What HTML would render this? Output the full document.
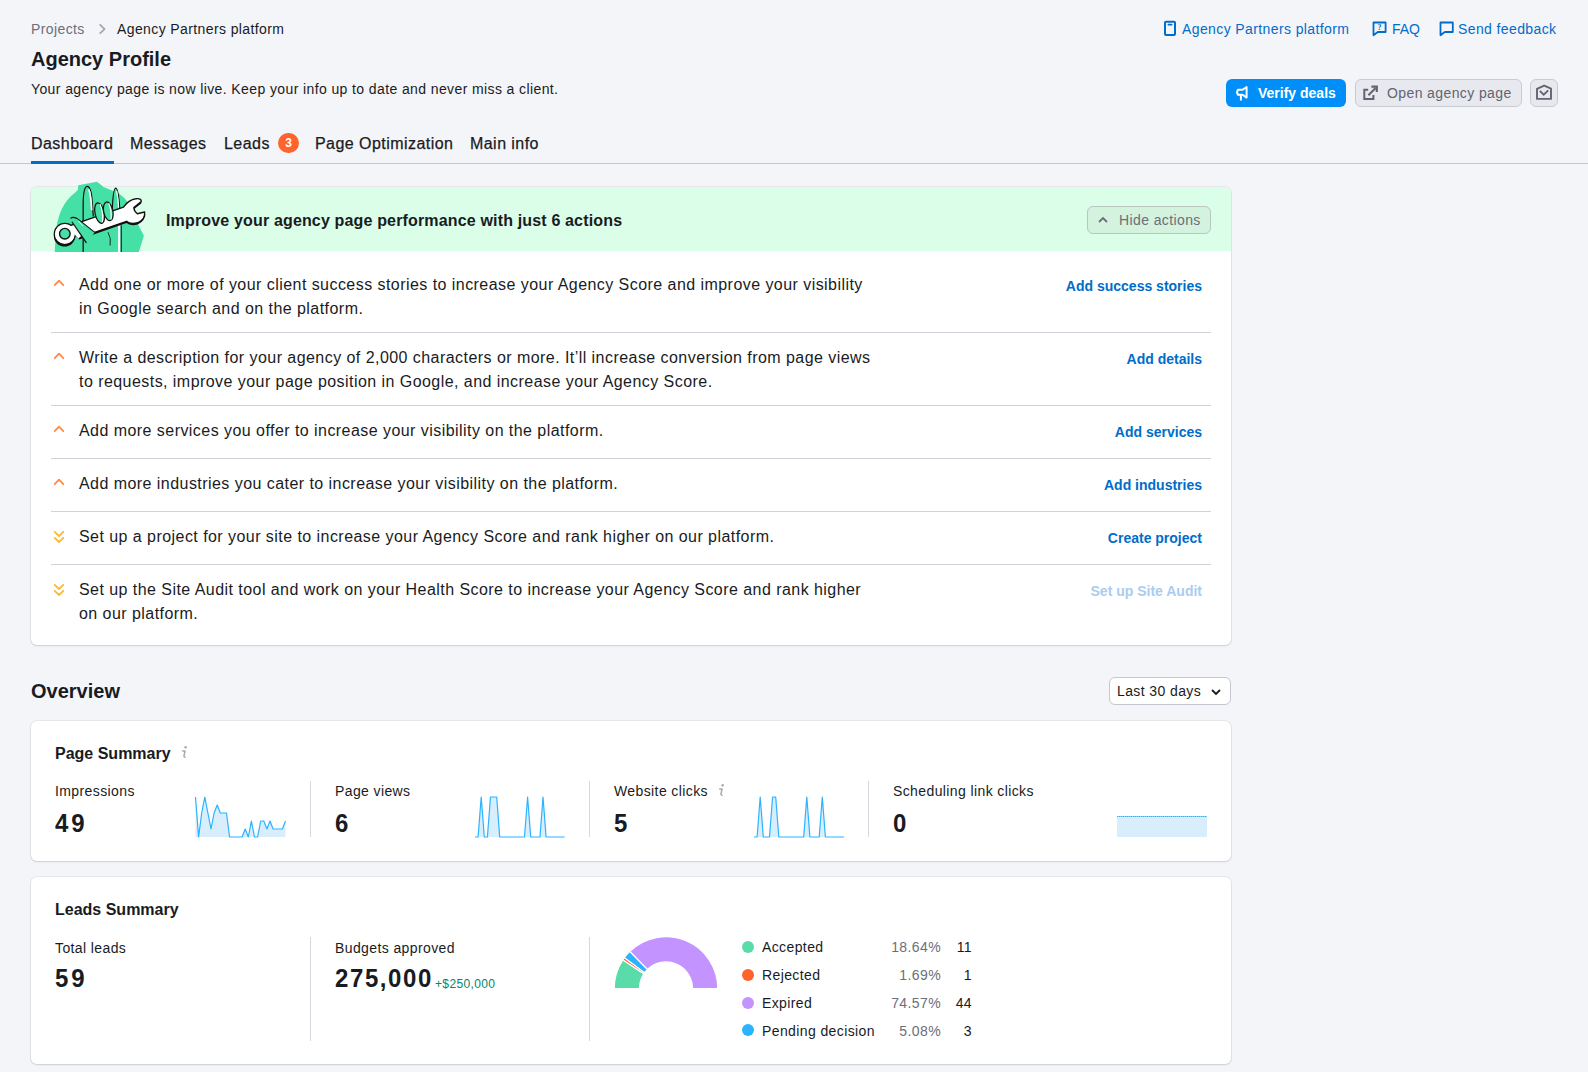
<!DOCTYPE html>
<html><head><meta charset="utf-8">
<style>
*{box-sizing:border-box;margin:0;padding:0}
html,body{width:1588px;height:1072px;overflow:hidden;background:#f4f5f9;font-family:"Liberation Sans",sans-serif;color:#191b23}
.a{position:absolute;white-space:nowrap}
.t14{font-size:14px;line-height:20px;letter-spacing:0.028em}
.t16{font-size:16px;line-height:24px;letter-spacing:0.028em}
.b{font-weight:700;letter-spacing:0}
.link{color:#006dca}
.card{position:absolute;left:31px;width:1200px;background:#fff;border-radius:6px;box-shadow:0 0 0 1px rgba(25,27,35,0.06),0 1px 2px rgba(25,27,35,0.12)}
.sep{position:absolute;left:20px;width:1160px;height:1px;background:#d1d3db}
.vdiv{position:absolute;width:1px;background:#d6d8df}
.num{font-size:24px;line-height:28px;font-weight:700;letter-spacing:1.6px;transform:scaleY(1.04);transform-origin:0 100%}
</style></head>
<body>
<!-- breadcrumb -->
<div class="a t14" style="left:31px;top:19px;color:#6c6e79">Projects</div>
<svg class="a" style="left:96px;top:22px" width="12" height="14" viewBox="0 0 12 14"><path d="M4.2 2.8 L8.6 7.2 L4.2 11.2" fill="none" stroke="#a6a8b1" stroke-width="1.8" stroke-linecap="round" stroke-linejoin="round"/></svg>
<div class="a t14" style="left:117px;top:19px">Agency Partners platform</div>

<div class="a b" style="left:31px;top:47px;font-size:20px;line-height:24px">Agency Profile</div>
<div class="a t14" style="left:31px;top:79px">Your agency page is now live. Keep your info up to date and never miss a client.</div>

<!-- top links -->
<svg class="a" style="left:1163px;top:20px" width="14" height="17" viewBox="0 0 14 17"><rect x="2" y="1.7" width="10" height="13.2" rx="1" fill="none" stroke="#006dca" stroke-width="2"/><path d="M5.4 4.6 H8.6" stroke="#006dca" stroke-width="1.8" stroke-linecap="round"/></svg>
<div class="a t14 link" style="left:1182px;top:19px">Agency Partners platform</div>
<svg class="a" style="left:1372px;top:20.5px" width="16" height="17" viewBox="0 0 16 17"><path d="M1.5 1.5 H13.6 V11 H5.8 L1.5 14.3 Z" fill="none" stroke="#006dca" stroke-width="1.8" stroke-linejoin="round"/><text x="7.6" y="9" font-size="8" font-weight="700" text-anchor="middle" fill="#006dca" font-family="Liberation Serif">?</text></svg>
<div class="a t14 link" style="left:1392px;top:19px;letter-spacing:0">FAQ</div>
<svg class="a" style="left:1438.5px;top:20.5px" width="17" height="17" viewBox="0 0 17 17"><path d="M1.5 1.5 H13.8 V11 H5.8 L1.5 14.3 Z" fill="none" stroke="#006dca" stroke-width="1.8" stroke-linejoin="round"/></svg>
<div class="a t14 link" style="left:1458px;top:19px">Send feedback</div>

<!-- buttons -->
<div class="a" style="left:1226px;top:79px;width:120px;height:28px;background:#008ff8;border-radius:6px"></div>
<svg class="a" style="left:1235px;top:85px" width="15" height="17" viewBox="0 0 15 17"><path d="M3 4.8 H7.6 L11.6 2 V12.6 L7.6 9.8 H3 Q1.2 7.3 3 4.8 Z" fill="none" stroke="#fff" stroke-width="2" stroke-linejoin="round"/><path d="M5.9 10 V14.8" stroke="#fff" stroke-width="2" stroke-linecap="round"/></svg>
<div class="a t14 b" style="left:1258px;top:83px;color:#fff">Verify deals</div>

<div class="a" style="left:1355px;top:79px;width:167px;height:28px;background:#e8e9ef;border:1px solid #c9cbd3;border-radius:6px"></div>
<svg class="a" style="left:1362px;top:85px" width="17" height="17" viewBox="0 0 17 17"><path d="M6.2 4.8 H2.3 V13.9 H11.4 V10.1" fill="none" stroke="#62646e" stroke-width="2"/><path d="M6.4 10.2 L13.6 3" fill="none" stroke="#62646e" stroke-width="2"/><path d="M9.4 1.6 H14.8 V7" fill="none" stroke="#62646e" stroke-width="2.2"/></svg>
<div class="a t14" style="left:1387px;top:83px;color:#62646e">Open agency page</div>

<div class="a" style="left:1530px;top:79px;width:28px;height:28px;background:#e8e9ef;border:1px solid #c9cbd3;border-radius:6px"></div>
<svg class="a" style="left:1535px;top:84px" width="18" height="18" viewBox="0 0 18 18"><path d="M2 4.9 L9.2 1.6 L16 4.6 V14.9 H2 Z" fill="none" stroke="#62646e" stroke-width="1.9" stroke-linejoin="round"/><path d="M4.8 6.9 L8.7 10.6 L13.2 6.4" fill="none" stroke="#62646e" stroke-width="1.9"/></svg>

<!-- tabs -->
<div class="a t16" style="left:31px;top:132px;-webkit-text-stroke:0.25px #191b23">Dashboard</div>
<div class="a t16" style="left:130px;top:132px;-webkit-text-stroke:0.25px #191b23">Messages</div>
<div class="a t16" style="left:224px;top:132px;-webkit-text-stroke:0.25px #191b23">Leads</div>
<div class="a" style="left:278px;top:133px;width:21px;height:20px;border-radius:10px;background:#ff642d;color:#fff;font-size:12px;line-height:20px;text-align:center;font-weight:700">3</div>
<div class="a t16" style="left:315px;top:132px;-webkit-text-stroke:0.25px #191b23">Page Optimization</div>
<div class="a t16" style="left:470px;top:132px;-webkit-text-stroke:0.25px #191b23">Main info</div>
<div class="a" style="left:0;top:163px;width:1588px;height:1px;background:#c4c7cf"></div>
<div class="a" style="left:31px;top:161px;width:83px;height:3px;background:#006dca"></div>

<!-- actions card -->
<div class="card" style="top:187px;height:458px;">
  <div class="a" style="left:0;top:0;width:1200px;height:64px;background:#dbfee8;border-radius:6px 6px 0 0"></div>
  <div class="a t16 b" style="left:135px;top:22px;letter-spacing:0.16px">Improve your agency page performance with just 6 actions</div>
  <div class="a" style="left:1056px;top:19px;width:124px;height:28px;border:1px solid #b9c6c0;border-radius:6px;background:#d3f3df"></div>
  <svg class="a" style="left:1065px;top:26px" width="14" height="14" viewBox="0 0 14 14"><path d="M3 9 L7 5 L11 9" fill="none" stroke="#6c6e79" stroke-width="1.8"/></svg>
  <div class="a t14" style="left:1088px;top:23px;color:#6c6e79">Hide actions</div>

  <!-- rows -->
  <div class="a t16" style="left:48px;top:86px">Add one or more of your client success stories to increase your Agency Score and improve your visibility<br>in Google search and on the platform.</div>
  <svg class="a" style="left:22px;top:90px" width="12" height="12" viewBox="0 0 12 12"><path d="M1.7 8.2 L6 3.6 L10.3 8.2" fill="none" stroke="#fd8c47" stroke-width="1.8" stroke-linecap="round" stroke-linejoin="round"/></svg>
  <div class="a t14 b" style="right:29px;top:89px;color:#006dca">Add success stories</div>
  <div class="a t16" style="left:48px;top:159px">Write a description for your agency of 2,000 characters or more. It’ll increase conversion from page views<br>to requests, improve your page position in Google, and increase your Agency Score.</div>
  <svg class="a" style="left:22px;top:163px" width="12" height="12" viewBox="0 0 12 12"><path d="M1.7 8.2 L6 3.6 L10.3 8.2" fill="none" stroke="#fd8c47" stroke-width="1.8" stroke-linecap="round" stroke-linejoin="round"/></svg>
  <div class="a t14 b" style="right:29px;top:162px;color:#006dca">Add details</div>
  <div class="a t16" style="left:48px;top:232px">Add more services you offer to increase your visibility on the platform.</div>
  <svg class="a" style="left:22px;top:236px" width="12" height="12" viewBox="0 0 12 12"><path d="M1.7 8.2 L6 3.6 L10.3 8.2" fill="none" stroke="#fd8c47" stroke-width="1.8" stroke-linecap="round" stroke-linejoin="round"/></svg>
  <div class="a t14 b" style="right:29px;top:235px;color:#006dca">Add services</div>
  <div class="a t16" style="left:48px;top:285px">Add more industries you cater to increase your visibility on the platform.</div>
  <svg class="a" style="left:22px;top:289px" width="12" height="12" viewBox="0 0 12 12"><path d="M1.7 8.2 L6 3.6 L10.3 8.2" fill="none" stroke="#fd8c47" stroke-width="1.8" stroke-linecap="round" stroke-linejoin="round"/></svg>
  <div class="a t14 b" style="right:29px;top:288px;color:#006dca">Add industries</div>
  <div class="a t16" style="left:48px;top:338px">Set up a project for your site to increase your Agency Score and rank higher on our platform.</div>
  <svg class="a" style="left:22px;top:343px" width="12" height="14" viewBox="0 0 12 14"><path d="M1.7 1.8 L6 6 L10.3 1.8 M1.7 7.8 L6 12 L10.3 7.8" fill="none" stroke="#fbbb36" stroke-width="1.8" stroke-linecap="round" stroke-linejoin="round"/></svg>
  <div class="a t14 b" style="right:29px;top:341px;color:#006dca">Create project</div>
  <div class="a t16" style="left:48px;top:391px">Set up the Site Audit tool and work on your Health Score to increase your Agency Score and rank higher<br>on our platform.</div>
  <svg class="a" style="left:22px;top:396px" width="12" height="14" viewBox="0 0 12 14"><path d="M1.7 1.8 L6 6 L10.3 1.8 M1.7 7.8 L6 12 L10.3 7.8" fill="none" stroke="#fbbb36" stroke-width="1.8" stroke-linecap="round" stroke-linejoin="round"/></svg>
  <div class="a t14 b" style="right:29px;top:394px;color:#a9cdef">Set up Site Audit</div>
  <div class="sep" style="top:145px"></div>
  <div class="sep" style="top:218px"></div>
  <div class="sep" style="top:271px"></div>
  <div class="sep" style="top:324px"></div>
  <div class="sep" style="top:377px"></div>
</div>

<!-- illustration -->
<svg class="a" style="left:30px;top:175px" width="140" height="77" viewBox="0 0 1588 873">
<g>
<path d="M280 880 L290 700 Q298 520 360 385 Q420 265 510 200 L542 170 L548 115 L760 75 L835 135 L1010 210 L1075 265 L1150 360 L1230 570 L1292 690 L1232 880 Z" fill="#45e0a6"/>
<path d="M603 880 V520" stroke="#111" stroke-width="14" fill="none"/>
<path d="M1012 880 V570" stroke="#fff" stroke-width="26" fill="none"/>
<path d="M1035 880 V570" stroke="#111" stroke-width="12" fill="none"/>
<path d="M885 650 Q925 720 908 800" stroke="#111" stroke-width="10" fill="none"/>
<!-- index finger -->
<path d="M603 540 V330 Q605 130 650 130 Q695 130 705 300 L718 470" fill="#45e0a6" stroke="#111" stroke-width="14"/>
<path d="M668 165 Q692 230 700 400" stroke="#fff" stroke-width="20" fill="none"/>
<!-- pinky -->
<path d="M932 420 Q942 150 972 150 Q1002 150 1018 380" fill="#45e0a6" stroke="#111" stroke-width="14"/>
<path d="M982 180 Q998 250 1005 370" stroke="#fff" stroke-width="14" fill="none"/>
<!-- wrench shadow -->
<g fill="#111">
<circle cx="392" cy="690" r="122"/>
<path d="M440 600 L1060 385 Q1120 300 1200 290 Q1265 280 1262 322 L1178 388 Q1180 430 1218 460 L1300 440 Q1312 520 1222 562 Q1132 582 1095 545 L560 730 Z"/>
</g>
<!-- wrench -->
<circle cx="395" cy="668" r="118" fill="#fff" stroke="#111" stroke-width="16"/>
<path d="M440 580 L1060 365 Q1120 280 1200 270 Q1265 260 1262 302 L1178 368 Q1180 410 1218 440 L1300 420 Q1312 500 1222 542 Q1132 562 1095 525 L560 710 Z" fill="#fff" stroke="#111" stroke-width="16" stroke-linejoin="round"/>
<path d="M440 580 L560 710" stroke="#fff" stroke-width="30"/>
<circle cx="395" cy="668" r="112" fill="#fff"/>
<circle cx="395" cy="665" r="60" fill="#45e0a6" stroke="#111" stroke-width="16"/>
<!-- thumb -->
<path d="M462 488 Q490 470 540 500 L735 648 L640 770 L475 530 Q450 500 462 488 Z" fill="#45e0a6"/>
<path d="M475 530 L640 770" stroke="#111" stroke-width="14" fill="none"/>
<path d="M458 492 Q495 466 545 500 L735 650" fill="none" stroke="#111" stroke-width="12"/>
<path d="M548 520 L600 580" fill="none" stroke="#fff" stroke-width="10"/>
<!-- folded fingers -->
<ellipse cx="790" cy="432" rx="52" ry="118" transform="rotate(-12 790 432)" fill="#45e0a6" stroke="#111" stroke-width="14"/>
<path d="M795 330 Q832 420 822 535" stroke="#fff" stroke-width="12" fill="none"/>
<ellipse cx="888" cy="412" rx="52" ry="108" transform="rotate(-12 888 412)" fill="#45e0a6" stroke="#111" stroke-width="14"/>
<path d="M893 320 Q927 400 920 505" stroke="#fff" stroke-width="12" fill="none"/>
</g>
</svg>

<!-- overview -->
<div class="a b" style="left:31px;top:679px;font-size:20px;line-height:24px">Overview</div>
<div class="a" style="left:1109px;top:677px;width:122px;height:28px;background:#fff;border:1px solid #c4c7cf;border-radius:6px"></div>
<div class="a t14" style="left:1117px;top:681px">Last 30 days</div>
<svg class="a" style="left:1209px;top:685px" width="14" height="14" viewBox="0 0 14 14"><path d="M3 5 L7 9 L11 5" fill="none" stroke="#191b23" stroke-width="1.8"/></svg>

<!-- page summary -->
<div class="card" style="top:721px;height:140px"></div>
<div class="a t16 b" style="left:55px;top:742px">Page Summary</div>
<svg class="a" style="left:179px;top:745px" width="10" height="14" viewBox="0 0 10 14"><circle cx="6.6" cy="2.3" r="1.25" fill="#a6a8b1"/><path d="M3.2 6 H6 L5 10.8 Q4.8 12.4 6.6 12.2" fill="none" stroke="#a6a8b1" stroke-width="1.5" stroke-linejoin="round"/></svg>

<div class="a t14" style="left:55px;top:781px">Impressions</div>
<div class="a num" style="left:55px;top:810px;letter-spacing:3px">49</div>
<div class="vdiv" style="left:310px;top:781px;height:56px"></div>
<div class="a t14" style="left:335px;top:781px">Page views</div>
<div class="a num" style="left:335px;top:810px">6</div>
<div class="vdiv" style="left:589px;top:781px;height:56px"></div>
<div class="a t14" style="left:614px;top:781px">Website clicks</div>
<svg class="a" style="left:716px;top:783px" width="10" height="14" viewBox="0 0 10 14"><circle cx="6.6" cy="2.3" r="1.25" fill="#a6a8b1"/><path d="M3.2 6 H6 L5 10.8 Q4.8 12.4 6.6 12.2" fill="none" stroke="#a6a8b1" stroke-width="1.5" stroke-linejoin="round"/></svg>
<div class="a num" style="left:614px;top:810px">5</div>
<div class="vdiv" style="left:868px;top:781px;height:56px"></div>
<div class="a t14" style="left:893px;top:781px">Scheduling link clicks</div>
<div class="a num" style="left:893px;top:810px">0</div>
<svg class="a" style="left:0;top:0" width="1588" height="1072"><path d="M195.5,837 L195.5,797.0 L198.6,837.0 L201.7,813.0 L204.8,797.0 L207.9,813.0 L211.0,829.0 L214.1,813.0 L217.2,805.0 L220.3,813.0 L223.4,813.0 L226.5,813.0 L229.6,837.0 L232.7,837.0 L235.8,837.0 L238.9,837.0 L242.1,837.0 L245.2,829.0 L248.3,837.0 L251.4,821.0 L254.5,837.0 L257.6,837.0 L260.7,821.0 L263.8,821.0 L266.9,829.0 L270.0,821.0 L273.1,829.0 L276.2,829.0 L279.3,829.0 L282.4,829.0 L285.5,821.0 L285.5,837 Z" fill="#d9eefd"/><polyline points="195.5,797.0 198.6,837.0 201.7,813.0 204.8,797.0 207.9,813.0 211.0,829.0 214.1,813.0 217.2,805.0 220.3,813.0 223.4,813.0 226.5,813.0 229.6,837.0 232.7,837.0 235.8,837.0 238.9,837.0 242.1,837.0 245.2,829.0 248.3,837.0 251.4,821.0 254.5,837.0 257.6,837.0 260.7,821.0 263.8,821.0 266.9,829.0 270.0,821.0 273.1,829.0 276.2,829.0 279.3,829.0 282.4,829.0 285.5,821.0" fill="none" stroke="#2bb3ff" stroke-width="1.2" stroke-linejoin="round"/><path d="M475.0,837 L475.0,837.0 L478.1,837.0 L481.2,797.0 L484.3,837.0 L487.4,837.0 L490.5,797.0 L493.6,797.0 L496.7,797.0 L499.7,837.0 L502.8,837.0 L505.9,837.0 L509.0,837.0 L512.1,837.0 L515.2,837.0 L518.3,837.0 L521.4,837.0 L524.5,837.0 L527.6,797.0 L530.7,837.0 L533.8,837.0 L536.9,837.0 L540.0,837.0 L543.0,797.0 L546.1,837.0 L549.2,837.0 L552.3,837.0 L555.4,837.0 L558.5,837.0 L561.6,837.0 L564.7,837.0 L564.7,837 Z" fill="#d9eefd"/><polyline points="475.0,837.0 478.1,837.0 481.2,797.0 484.3,837.0 487.4,837.0 490.5,797.0 493.6,797.0 496.7,797.0 499.7,837.0 502.8,837.0 505.9,837.0 509.0,837.0 512.1,837.0 515.2,837.0 518.3,837.0 521.4,837.0 524.5,837.0 527.6,797.0 530.7,837.0 533.8,837.0 536.9,837.0 540.0,837.0 543.0,797.0 546.1,837.0 549.2,837.0 552.3,837.0 555.4,837.0 558.5,837.0 561.6,837.0 564.7,837.0" fill="none" stroke="#2bb3ff" stroke-width="1.2" stroke-linejoin="round"/><path d="M754.0,837 L754.0,837.0 L757.1,837.0 L760.2,797.0 L763.3,837.0 L766.4,837.0 L769.5,837.0 L772.6,797.0 L775.7,797.0 L778.8,837.0 L781.9,837.0 L785.0,837.0 L788.1,837.0 L791.2,837.0 L794.3,837.0 L797.4,837.0 L800.6,837.0 L803.7,837.0 L806.8,797.0 L809.9,837.0 L813.0,837.0 L816.1,837.0 L819.2,837.0 L822.3,797.0 L825.4,837.0 L828.5,837.0 L831.6,837.0 L834.7,837.0 L837.8,837.0 L840.9,837.0 L844.0,837.0 L844.0,837 Z" fill="#d9eefd"/><polyline points="754.0,837.0 757.1,837.0 760.2,797.0 763.3,837.0 766.4,837.0 769.5,837.0 772.6,797.0 775.7,797.0 778.8,837.0 781.9,837.0 785.0,837.0 788.1,837.0 791.2,837.0 794.3,837.0 797.4,837.0 800.6,837.0 803.7,837.0 806.8,797.0 809.9,837.0 813.0,837.0 816.1,837.0 819.2,837.0 822.3,797.0 825.4,837.0 828.5,837.0 831.6,837.0 834.7,837.0 837.8,837.0 840.9,837.0 844.0,837.0" fill="none" stroke="#2bb3ff" stroke-width="1.2" stroke-linejoin="round"/><rect x="1117" y="816" width="90" height="21" fill="#d9eefd"/><line x1="1117" y1="816.5" x2="1207" y2="816.5" stroke="#2bb3ff" stroke-width="1.2" stroke-dasharray="1.5 0.5"/></svg>

<!-- leads summary -->
<div class="card" style="top:877px;height:187px"></div>
<div class="a t16 b" style="left:55px;top:898px">Leads Summary</div>

<div class="a t14" style="left:55px;top:938px">Total leads</div>
<div class="a num" style="left:55px;top:965px;letter-spacing:3px">59</div>
<div class="vdiv" style="left:310px;top:937px;height:104px"></div>
<div class="a t14" style="left:335px;top:938px">Budgets approved</div>
<div class="a num" style="left:335px;top:965px">275,000</div>
<div class="a" style="left:435px;top:976px;font-size:12px;line-height:16px;letter-spacing:0.03em;color:#00866e">+$250,000</div>
<div class="vdiv" style="left:589px;top:937px;height:104px"></div>
<svg class="a" style="left:0;top:0" width="1588" height="1072"><path d="M614.20,988.50 A51.8,51.8 0 0 1 622.83,959.87 L643.92,973.85 A26.5,26.5 0 0 0 639.50,988.50 Z" fill="#59dcaa" stroke="#fff" stroke-width="1.2" stroke-linejoin="miter"/><path d="M622.83,959.87 A51.8,51.8 0 0 1 624.41,957.62 L644.72,972.70 A26.5,26.5 0 0 0 643.92,973.85 Z" fill="#ff622d" stroke="#fff" stroke-width="1.2" stroke-linejoin="miter"/><path d="M624.41,957.62 A51.8,51.8 0 0 1 629.85,951.40 L647.50,969.52 A26.5,26.5 0 0 0 644.72,972.70 Z" fill="#2bb3ff" stroke="#fff" stroke-width="1.2" stroke-linejoin="miter"/><path d="M629.85,951.40 A51.8,51.8 0 0 1 717.80,988.47 L692.50,988.48 A26.5,26.5 0 0 0 647.50,969.52 Z" fill="#c394ff" stroke="#fff" stroke-width="1.2" stroke-linejoin="miter"/></svg>
<div class="a" style="left:742px;top:941.0px;width:12px;height:12px;border-radius:6px;background:#59dcaa"></div>
<div class="a t14" style="left:762px;top:937.2px">Accepted</div>
<div class="a t14" style="right:647px;top:937.2px;color:#6c6e79">18.64%</div>
<div class="a t14" style="right:616px;top:937.2px">11</div>
<div class="a" style="left:742px;top:968.8px;width:12px;height:12px;border-radius:6px;background:#ff622d"></div>
<div class="a t14" style="left:762px;top:965.0px">Rejected</div>
<div class="a t14" style="right:647px;top:965.0px;color:#6c6e79">1.69%</div>
<div class="a t14" style="right:616px;top:965.0px">1</div>
<div class="a" style="left:742px;top:996.6px;width:12px;height:12px;border-radius:6px;background:#c394ff"></div>
<div class="a t14" style="left:762px;top:992.8px">Expired</div>
<div class="a t14" style="right:647px;top:992.8px;color:#6c6e79">74.57%</div>
<div class="a t14" style="right:616px;top:992.8px">44</div>
<div class="a" style="left:742px;top:1024.4px;width:12px;height:12px;border-radius:6px;background:#2bb3ff"></div>
<div class="a t14" style="left:762px;top:1020.6px">Pending decision</div>
<div class="a t14" style="right:647px;top:1020.6px;color:#6c6e79">5.08%</div>
<div class="a t14" style="right:616px;top:1020.6px">3</div>

</body></html>
